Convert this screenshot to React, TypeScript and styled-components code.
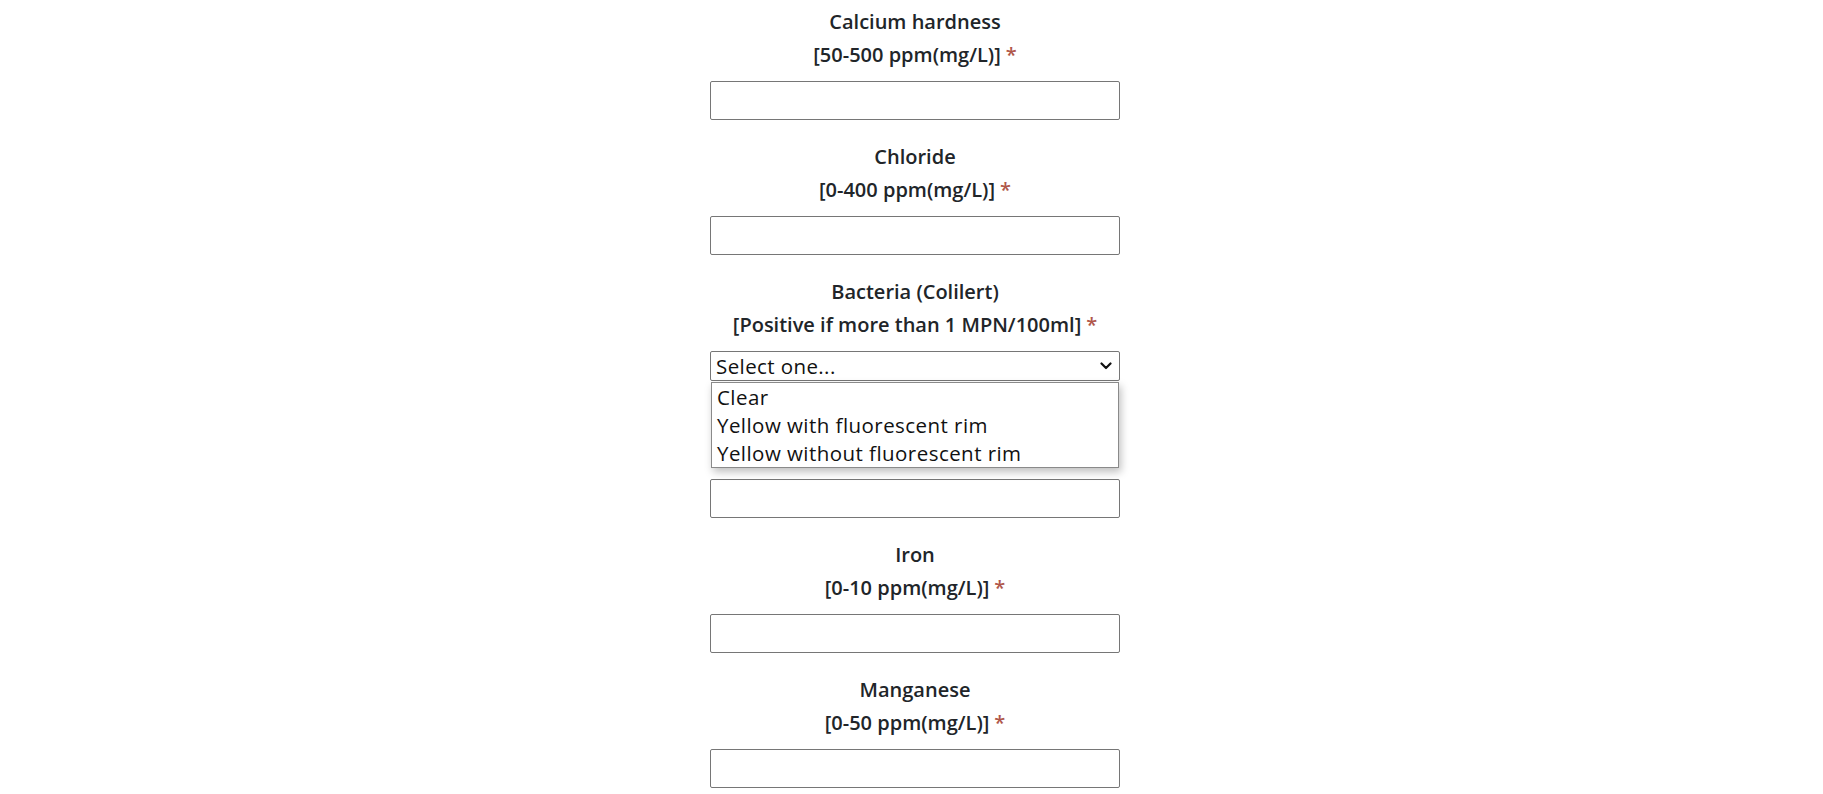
import React from "react";
import styled, { createGlobalStyle } from "styled-components";

const GlobalStyle = createGlobalStyle`
  html, body { margin: 0; padding: 0; background: #ffffff; }
  body { font-family: "Open Sans", Lato, sans-serif; color: #212529; }
`;

const Page = styled.main`
  display: flex;
  justify-content: center;
  padding: 6px 0 0 7px;
`;

const Form = styled.form`
  width: 410px;
  display: flex;
  flex-direction: column;
`;

const Field = styled.div<{ $extra?: number }>`
  position: relative;
  display: flex;
  flex-direction: column;
  align-items: stretch;
  margin-bottom: ${(p) => 21 + (p.$extra || 0)}px;
`;

const Label = styled.label`
  display: block;
  text-align: center;
  font-size: 20px;
  font-weight: 600;
  line-height: 32.5px;
  margin-bottom: 10px;
  white-space: nowrap;
`;

const LabelSpacer = styled.div`
  height: 65px;
  margin-bottom: 10px;
`;

const Required = styled.span`
  color: #b0574a;
  margin-left: 5px;
`;

const TextInput = styled.input`
  box-sizing: border-box;
  width: 100%;
  height: 39px;
  border: 1px solid #767676;
  border-radius: 2px;
  background: #fff;
  font: inherit;
  font-size: 20px;
  padding: 0 5px;
`;

const SelectBox = styled.div`
  box-sizing: border-box;
  height: 30px;
  border: 1px solid #767676;
  border-radius: 2px;
  background: #fff;
  display: flex;
  align-items: center;
  justify-content: space-between;
  padding: 0 7px 0 5px;
  font-size: 20.5px;
  letter-spacing: 0.4px;
  color: #111;
`;

const Popup = styled.ul`
  position: absolute;
  left: 1px;
  right: 1px;
  top: calc(100% + 1px);
  margin: 0;
  padding: 0;
  list-style: none;
  background: #fff;
  border: 1px solid #8a8a8a;
  box-shadow: 2px 4px 8px rgba(0, 0, 0, 0.25);
  z-index: 5;
`;

const Option = styled.li`
  font-size: 20.5px;
  letter-spacing: 0.45px;
  line-height: 28px;
  padding: 0 5px;
  color: #111;
  white-space: nowrap;
`;

const fields = [
  { name: "Calcium hardness", range: "[50-500 ppm(mg/L)]" },
  { name: "Chloride", range: "[0-400 ppm(mg/L)]" },
];

const fieldsAfter = [
  { name: "Iron", range: "[0-10 ppm(mg/L)]" },
  { name: "Manganese", range: "[0-50 ppm(mg/L)]" },
];

const Chevron = () => (
  <svg width="12" height="8" viewBox="0 0 12 8" aria-hidden="true">
    <path d="M1.5 1.5 L6 6 L10.5 1.5" fill="none" stroke="#111" strokeWidth="2.2" strokeLinecap="round" strokeLinejoin="round" />
  </svg>
);

const TextField = ({ name, range }: { name: string; range: string }) => (
  <Field>
    <Label>
      {name}
      <br />
      {range}
      <Required>*</Required>
    </Label>
    <TextInput type="text" />
  </Field>
);

export default function App() {
  return (
    <>
      <GlobalStyle />
      <Page>
        <Form>
          {fields.map((f) => (
            <TextField key={f.name} {...f} />
          ))}
          <Field $extra={2}>
            <Label>
              Bacteria (Colilert)
              <br />
              [Positive if more than 1 MPN/100ml]
              <Required>*</Required>
            </Label>
            <SelectBox>
              <span>Select one...</span>
              <Chevron />
            </SelectBox>
            <Popup>
              <Option>Clear</Option>
              <Option>Yellow with fluorescent rim</Option>
              <Option>Yellow without fluorescent rim</Option>
            </Popup>
          </Field>
          <Field>
            <LabelSpacer />
            <TextInput type="text" />
          </Field>
          {fieldsAfter.map((f) => (
            <TextField key={f.name} {...f} />
          ))}
        </Form>
      </Page>
    </>
  );
}
